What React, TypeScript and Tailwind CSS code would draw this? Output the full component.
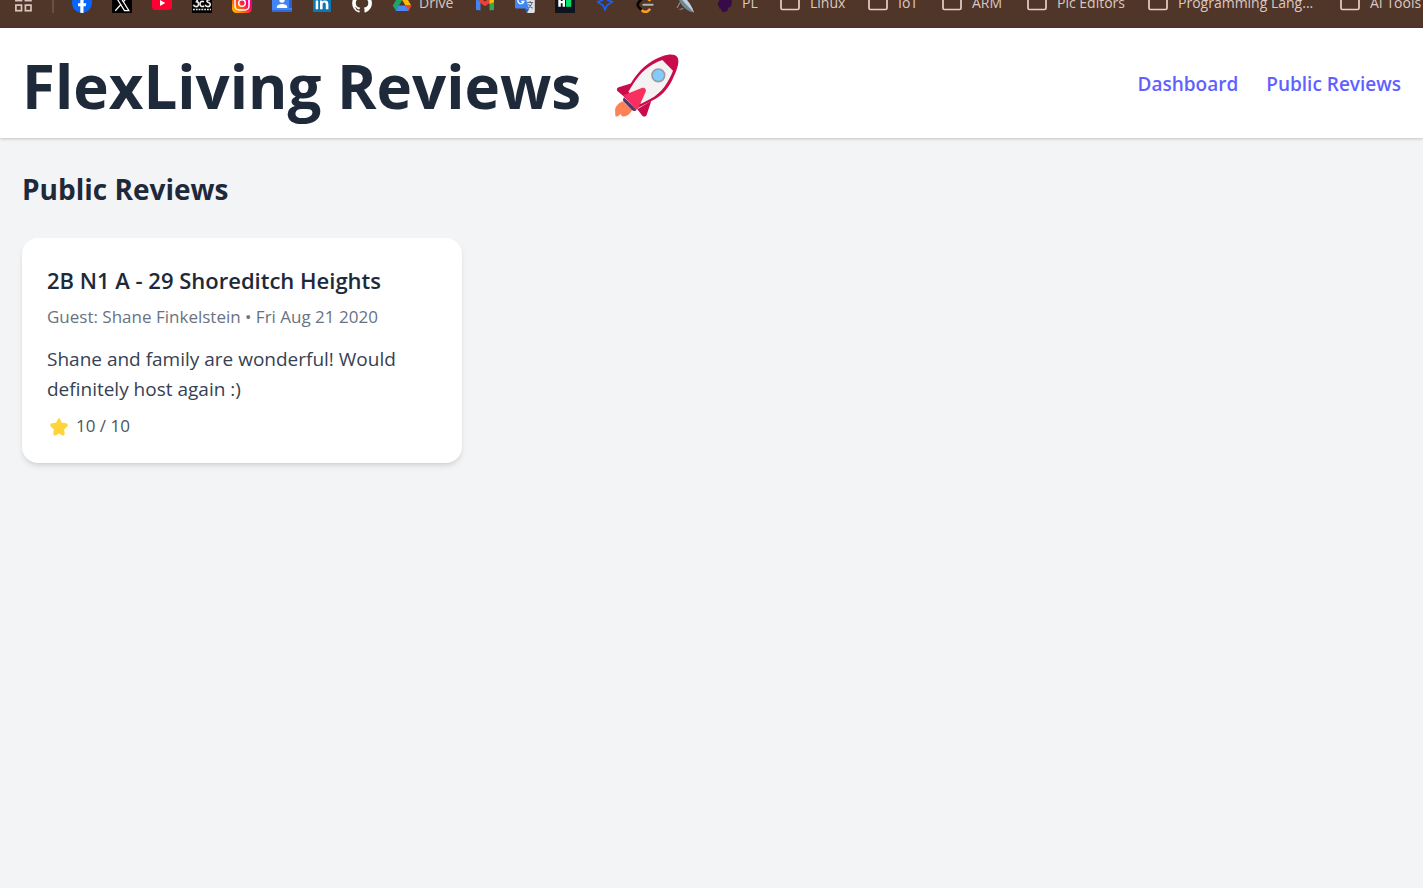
import type { ReactNode } from "react";

type Bookmark = { name: string; icon: ReactNode; label?: string; width?: string };

const Svg = ({ children }: { children: ReactNode }) => (
  <svg viewBox="0 0 20 20" className="size-5 shrink-0" aria-hidden="true">
    {children}
  </svg>
);

const FolderIcon = () => (
  <Svg>
    <path
      d="M1 4.5a2 2 0 0 1 2-2h4l2 2h8a2 2 0 0 1 2 2V15a1.5 1.5 0 0 1-1.5 1.5h-15A1.5 1.5 0 0 1 1 15z"
      fill="none"
      stroke="#e6cfc6"
      strokeWidth="1.7"
    />
  </Svg>
);

const icons = {
  apps: (
    <Svg>
      <g fill="none" stroke="#d9c5bd" strokeWidth="1.7">
        <rect x="1.9" y="2" width="5.6" height="5.6" />
        <rect x="11.4" y="2" width="5.6" height="5.6" />
        <rect x="1.9" y="12.1" width="5.6" height="5.6" />
        <rect x="11.4" y="12.1" width="5.6" height="5.6" />
      </g>
    </Svg>
  ),
  facebook: (
    <Svg>
      <circle cx="10" cy="10" r="10" fill="#0866ff" />
      <path d="M8.3 19.8v-6.6H6v-3h2.3V8.3c0-3 1.4-4.4 4.2-4.4l1.8.2v2.6h-1.2c-1.2 0-1.6.5-1.6 1.7v1.8h2.8l-.6 3h-2.2v6.7z" fill="#fff" />
    </Svg>
  ),
  x: (
    <Svg>
      <rect width="20" height="20" fill="#000" />
      <path d="M3.3 3h4.4l9.2 14.6h-4.4z" fill="none" stroke="#fff" strokeWidth="1.2" />
      <path d="M3.3 17.8 9 11.4M11 9.2 16.3 3" stroke="#fff" strokeWidth="1.3" />
    </Svg>
  ),
  youtube: (
    <Svg>
      <rect y="3" width="20" height="14" rx="3.5" fill="#ff0033" />
      <path d="m8 7 5.3 3L8 13z" fill="#fff" />
    </Svg>
  ),
  lettering: (
    <Svg>
      <rect width="20" height="20" fill="#000" />
      <g fill="none" stroke="#eee" strokeWidth="1.6">
        <path d="M2 6h4L4.5 8.6C7.5 9 7.2 13.6 4.2 13.6c-1.5 0-2.4-.6-2.7-1.8" />
        <path d="M12 8.8C9.5 7.6 8 9 8 11s1.8 3.3 4.2 2" />
        <path d="M18 7c-2.5-1-4.5 1.5-1.5 2.6 3 1 1.7 4-.5 4-1.5 0-2.5-.6-2.8-1.8" />
        <path d="M1 16.6h18" strokeWidth="1.5" strokeDasharray="1.8 1" />
      </g>
    </Svg>
  ),
  instagram: (
    <Svg>
      <defs>
        <linearGradient id="insta" x1="0" y1="1" x2="1" y2="0">
          <stop offset="0" stopColor="#ffd600" />
          <stop offset=".3" stopColor="#ff6a00" />
          <stop offset=".6" stopColor="#ff0069" />
          <stop offset="1" stopColor="#d300c5" />
        </linearGradient>
      </defs>
      <rect width="20" height="20" rx="4.5" fill="url(#insta)" />
      <rect x="3" y="3" width="14" height="14" rx="4" fill="none" stroke="#fff" strokeWidth="1.5" />
      <circle cx="10" cy="10" r="3.3" fill="none" stroke="#fff" strokeWidth="1.5" />
      <circle cx="14" cy="6" r="1" fill="#fff" />
    </Svg>
  ),
  contacts: (
    <Svg>
      <rect x="0" y="1" width="20" height="17.8" rx="1.5" fill="#4285f4" />
      <path d="M17 4h3v11h-3z" fill="#2a62c9" />
      <rect x="0" y="17" width="20" height="1.8" rx=".9" fill="#3367d6" />
      <circle cx="10" cy="7" r="2.7" fill="#fff" />
      <path d="M4.8 15v-1c0-2 2.7-3 5.2-3s5.2 1 5.2 3v1z" fill="#fff" />
    </Svg>
  ),
  linkedin: (
    <Svg>
      <rect x="1" y="1" width="18" height="18" rx="1" fill="#0a77b7" />
      <path d="M3.7 7.6h2.5v8.6H3.7zM3.6 3.7h2.7v2.6H3.6zM8 7.6h2.4v1.2c.5-.9 1.5-1.4 2.7-1.4 2.6 0 3.3 1.6 3.3 4.1v4.7h-2.6v-4.3c0-1.2-.1-2.3-1.5-2.3s-1.7 1-1.7 2.2v4.4H8z" fill="#fff" />
    </Svg>
  ),
  github: (
    <Svg>
      <path
        d="M10 .5a9.8 9.8 0 0 0-3.1 19.1c.5.1.7-.2.7-.5v-1.7c-2.7.6-3.3-1.2-3.3-1.2-.4-1.1-1.1-1.4-1.1-1.4-.9-.6.1-.6.1-.6 1 .1 1.5 1 1.5 1 .9 1.5 2.3 1.1 2.9.8 0-.6.3-1.1.6-1.3-2.2-.3-4.5-1.1-4.5-4.9 0-1.1.4-2 1-2.7 0-.2-.4-1.2.1-2.6 0 0 .8-.3 2.7 1a9 9 0 0 1 4.9 0c1.9-1.3 2.7-1 2.7-1 .5 1.4.2 2.4.1 2.6.6.7 1 1.6 1 2.7 0 3.8-2.3 4.6-4.5 4.9.4.3.7.9.7 1.8v2.6c0 .3.2.6.7.5A9.8 9.8 0 0 0 10 .5"
        fill="#fff"
      />
    </Svg>
  ),
  drive: (
    <Svg>
      <path d="M7 2h6l6.2 10.5h-5.6z" fill="#ffba00" />
      <path d="M7 2 .8 12.6l3 5.2 6.3-10.6z" fill="#1fa463" />
      <path d="M6.5 12.5h12.8l-2.8 5.4H3.7z" fill="#4688f4" />
      <path d="m13.6 12.5 2.9 5.4 2.8-5.4z" fill="#ea4335" />
    </Svg>
  ),
  gmail: (
    <Svg>
      <path d="M1 5.5 5.5 9v8.3H2.3A1.3 1.3 0 0 1 1 16z" fill="#4285f4" />
      <path d="M19 5.5 14.5 9v8.3h3.2A1.3 1.3 0 0 0 19 16z" fill="#34a853" />
      <path d="m4 4 6 4.6L16 4v5l-6 4.2L4 9z" fill="#ea4335" />
      <path d="m14.5 4.5 3-1.5L19 5.5V9l-4.5 2z" fill="#fbbc04" />
    </Svg>
  ),
  translate: (
    <Svg>
      <path d="M8 5h10.5c.8 0 1.3.6 1.3 1.3v12.2c0 .8-.5 1.4-1.3 1.4H12z" fill="#dfe1e5" />
      <path d="M1.3 0H9l5 15.5H1.3A1.3 1.3 0 0 1 0 14.2V1.3C0 .6.6 0 1.3 0" fill="#4285f4" />
      <path d="m9.6 15.5 2.6 4.4 2-4.4z" fill="#2563c9" />
      <path d="M8.2 5.7a3 3 0 1 0 .6 2.8H6.2" fill="none" stroke="#fff" strokeWidth="1.3" />
      <path d="M12.2 9.5h6M15.2 8v1.5m1.9 0c-.5 2.5-2 4.3-3.7 5.5m0-3.8c1 1.7 2.5 3 4.2 4" fill="none" stroke="#607080" strokeWidth="1.1" />
    </Svg>
  ),
  hacker: (
    <Svg>
      <rect width="20" height="20" fill="#0e141e" />
      <path d="M3.3 4h2.5v4h1.8V4H10v9.8H7.6v-3.6H5.8v3.6H3.3z" fill="#fff" />
      <rect x="11" y="4" width="5.2" height="9.8" fill="#05e26b" />
    </Svg>
  ),
  spark: (
    <Svg>
      <path
        d="M10 1.5c.7 4 1.3 5.2 3.3 6l4 1.3c-.5 1.2-2.3 1.7-4.2 2.7-1.8 1-2.4 2.4-3.1 6.2-.7-3.8-1.3-5.2-3.1-6.2-1.9-1-3.7-1.5-4.2-2.7l4-1.3c2-.8 2.6-2 3.3-6"
        fill="none"
        stroke="#1463ff"
        strokeWidth="1.6"
      />
    </Svg>
  ),
  leetcode: (
    <Svg>
      <path d="M11.5 1 4 8.8c-1.5 1.7-1.5 4 0 5.6l2.6 2.9" fill="none" stroke="#070706" strokeWidth="2.6" />
      <path d="M6.6 17c2 2.3 5 2.4 6.8.6l1.8-1.7M11 5.2c1 0 1.900.4 2.600 1l1.800 1.600" fill="none" stroke="#ffa116" strokeWidth="2.6" />
      <path d="M8.3 11.7h9.4" stroke="#b3b3b3" strokeWidth="2" strokeLinecap="round" />
    </Svg>
  ),
  dish: (
    <Svg>
      <path d="M3 1c7 2 13 9.500 16 18.600C11.500 18.500 3 11 3 1" fill="#6f8894" />
      <path d="M3 1c7 2 13 9.500 16 18.600C14 14 7 8 3 1" fill="#c3d1d9" />
      <path d="M2 15 5 9.500M8.500 15.500 4.500 16.500" fill="none" stroke="#8b9295" strokeWidth="1.1" />
    </Svg>
  ),
  blob: (
    <Svg>
      <path
        d="M5 5.5C7 2 14 2 16 5.5c1.5 2.500.8 5-.5 8.500l-2.500.8-.5 2.700c-2 1.800-4.500 2-6 .5l-.5-2-2-.8.3-2-1.800-1.200.8-2.500z"
        fill="#370b49"
      />
    </Svg>
  ),
  folder: <FolderIcon />,
};

const bookmarks: Bookmark[] = [
  { name: "Facebook", icon: icons.facebook },
  { name: "X", icon: icons.x },
  { name: "YouTube", icon: icons.youtube },
  { name: "SOS", icon: icons.lettering },
  { name: "Instagram", icon: icons.instagram },
  { name: "Contacts", icon: icons.contacts },
  { name: "LinkedIn", icon: icons.linkedin },
  { name: "GitHub", icon: icons.github },
  { name: "Drive", icon: icons.drive, label: "Drive", width: "w-[63px]" },
  { name: "Gmail", icon: icons.gmail },
  { name: "Translate", icon: icons.translate },
  { name: "HackerRank", icon: icons.hacker },
  { name: "Spark", icon: icons.spark },
  { name: "LeetCode", icon: icons.leetcode },
  { name: "Dish", icon: icons.dish },
  { name: "PL", icon: icons.blob, label: "PL", width: "w-[45px]" },
  { name: "Linux", icon: icons.folder, label: "Linux", width: "w-[68px]" },
  { name: "IoT", icon: icons.folder, label: "IoT", width: "w-[54px]" },
  { name: "ARM", icon: icons.folder, label: "ARM", width: "w-[65px]" },
  { name: "Pic Editors", icon: icons.folder, label: "Pic Editors", width: "w-[101px]" },
  { name: "Programming", icon: icons.folder, label: "Programming Lang...", width: "w-[172px]" },
  { name: "AI Tools", icon: icons.folder, label: "AI Tools", width: "w-[90px]" },
];

function BookmarksBar() {
  return (
    <nav
      aria-label="Bookmarks"
      className="flex h-7 items-end gap-5 overflow-hidden bg-[#503529] pb-[15px] pl-[14px] text-[#dcc8c0]"
    >
      <button type="button" aria-label="Apps" className="shrink-0">
        {icons.apps}
      </button>
      <span className="-mx-0.5 h-5 w-0.5 shrink-0 rounded bg-[#6e4e42]" />
      {bookmarks.map((b) => (
        <a
          key={b.name}
          href="#"
          aria-label={b.label ?? b.name}
          className={`flex h-5 shrink-0 items-center whitespace-nowrap text-[14px] leading-5 ${
            b.label ? b.width : "w-5"
          } ${b.icon === icons.folder ? "gap-[10px]" : "gap-[7px]"}`}
        >
          {b.icon}
          {b.label && <span>{b.label}</span>}
        </a>
      ))}
    </nav>
  );
}

function Rocket() {
  return (
    <svg viewBox="45 28 192 192" className="size-16" role="img" aria-label="Rocket">
      <path d="M68 170c-13 5-20 14-23 24l1 18c0 5 6 5 12 0l4-4 3 7c9 2 17-1 23-7l9-12z" fill="#ff8257" />
      <path d="m95 116-39 12c-6 2-7 8-3 12l18 15zM154 168l-14 43c-3 6-9 6-13 2l-15-19z" fill="#ca0b4a" />
      <path d="M92 117c22-38 55-69 97-83 20-7 39-6 44 5 7 15-5 44-16 66-14 29-34 51-63 64L108 193 70 154z" fill="#ca0b4a" />
      <path d="M98 120c23-37 51-61 89-74l32 32c-13 34-34 67-67 84l-30 16-37-37z" fill="#f3f3f3" />
      <path d="M72 158c-4 6-4 10 0 14l24 24c4 4 9 4 14 0z" fill="#533566" />
      <path d="m71 152 54-22c8-3 15 4 12 11l-22 50c-2 4-6 4-10 1z" fill="#f92f60" />
      <circle cx="175" cy="92" r="19" fill="#83cbff" stroke="#9b9b9b" strokeWidth="5" />
    </svg>
  );
}

function Star() {
  return (
    <svg viewBox="0 0 24 24" className="size-6" aria-hidden="true">
      <path
        d="m12 4.8 2.2 4.4 4.9.7c1 .2 1.3 1.3.6 2l-3.4 3.3.7 4.4c.1 1-.8 1.4-1.6 1L12 18.6l-3.4 2c-.8.4-1.7 0-1.6-1l.7-4.4-3.4-3.3c-.7-.7-.4-1.8.6-2l4.9-.7z"
        fill="#ffd43b"
        stroke="#ffd43b"
        strokeWidth="1.5"
        strokeLinejoin="round"
      />
    </svg>
  );
}

export default function App() {
  return (
    <div className="flex min-h-screen flex-col bg-gray-100 font-['Open_Sans','Noto_Sans',sans-serif] text-gray-800">
      <BookmarksBar />
      <header className="flex min-h-[110px] items-center justify-between bg-white px-[22px] pt-0.5 shadow-[0_1px_3px_rgba(0,0,0,0.2)]">
        <h1 className="flex items-center gap-[34px] pt-1 text-[60px] leading-[70px] font-bold">
          FlexLiving Reviews
          <Rocket />
        </h1>
        <nav aria-label="Main" className="flex gap-7 text-[19px] leading-7 font-semibold text-indigo-500">
          <a href="#dashboard">Dashboard</a>
          <a href="#reviews">Public Reviews</a>
        </nav>
      </header>
      <main className="px-[22px] pt-8">
        <h2 className="text-[28px] leading-[38px] font-bold">Public Reviews</h2>
        <div className="grid grid-cols-3 gap-[30px] pt-[30px]">
          <article className="rounded-2xl bg-white px-[25px] pt-[25px] pb-6 shadow-md">
            <h3 className="text-[22px] leading-[34px] font-semibold">2B N1 A - 29 Shoreditch Heights</h3>
            <p className="pt-[7px] text-[17px] leading-[26px] text-gray-500">
              Guest: Shane Finkelstein • Fri Aug 21 2020
            </p>
            <p className="pt-[14px] text-[19px] leading-[30px] text-gray-700">
              Shane and family are wonderful! Would definitely host again :)
            </p>
            <p className="flex items-center gap-[5px] pt-[9px] text-[17px] leading-[26px] text-gray-600">
              <Star />
              10 / 10
            </p>
          </article>
        </div>
      </main>
    </div>
  );
}
